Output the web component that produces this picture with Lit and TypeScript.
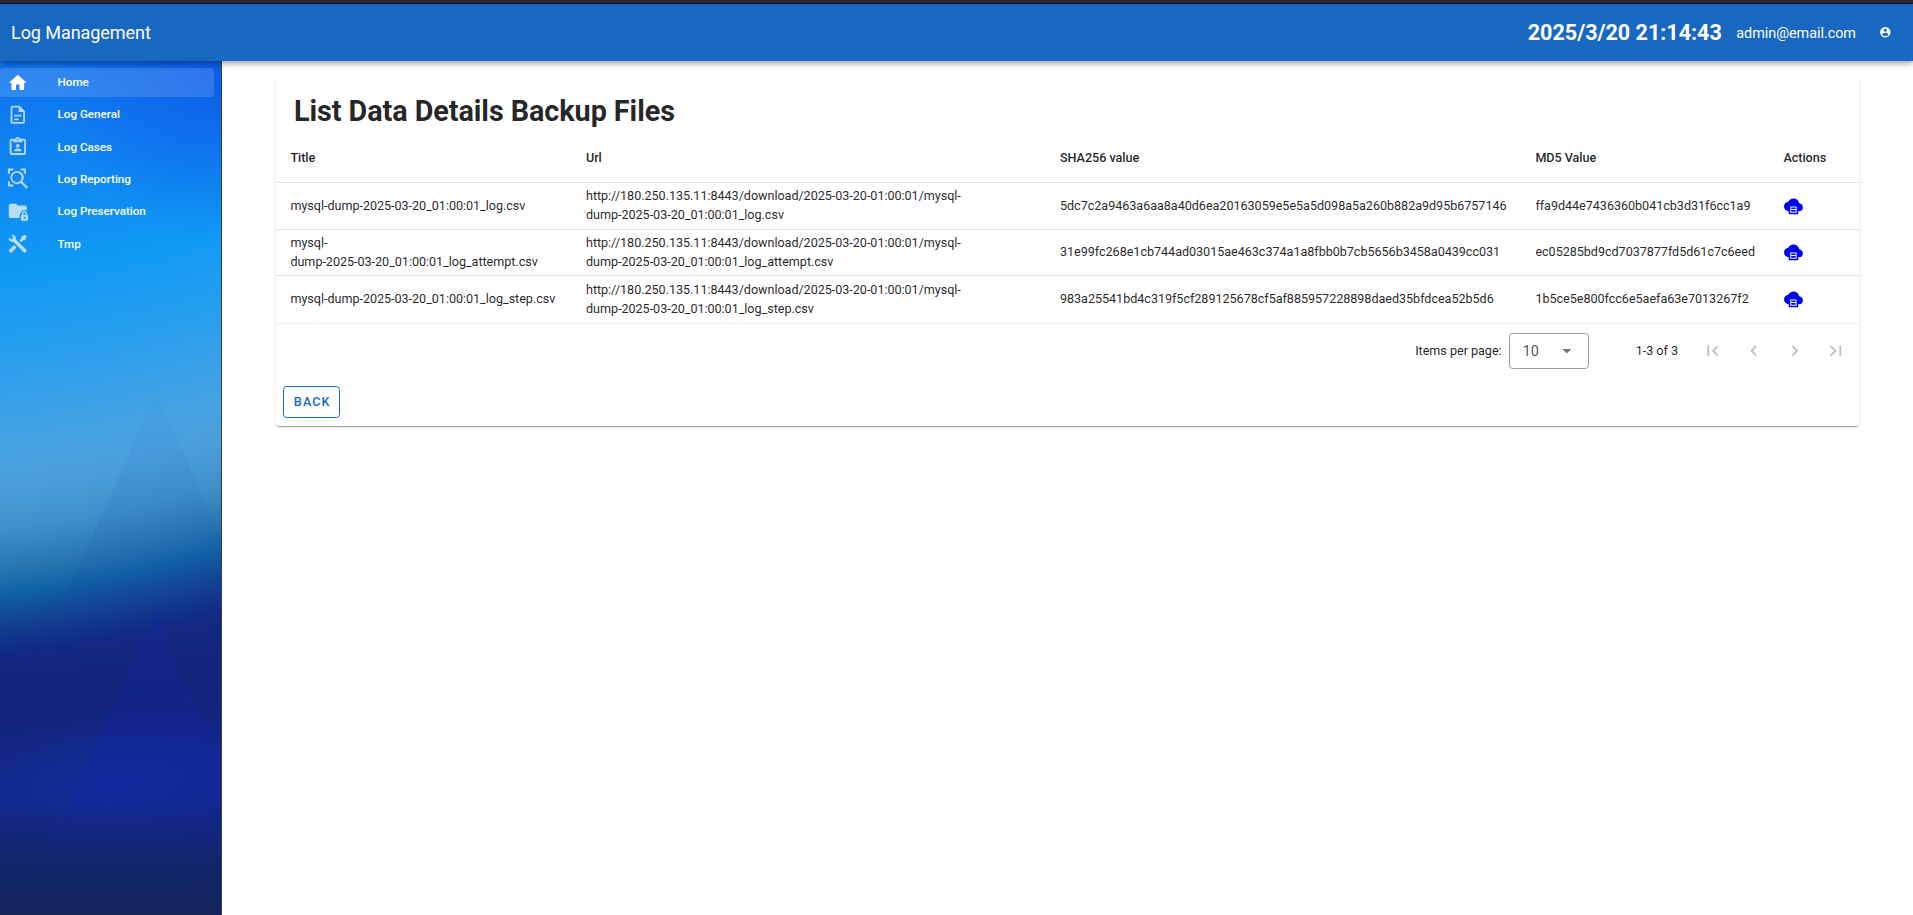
import { LitElement, html, css, svg } from "lit";
import { customElement } from "lit/decorators.js";
import { classMap } from "lit/directives/class-map.js";

const icons: Record<string, string> = {
  home: "M10,20V14H14V20H19V12H22L12,3L2,12H5V20H10Z",
  general: "M6,2A2,2 0 0,0 4,4V20A2,2 0 0,0 6,22H18A2,2 0 0,0 20,20V8L14,2H6M6,4H13V9H18V20H6V4M8,12V14H16V12H8M8,16V18H13V16H8Z",
  cases: "M19,3H14.82C14.4,1.84 13.3,1 12,1C10.7,1 9.6,1.84 9.18,3H5A2,2 0 0,0 3,5V19A2,2 0 0,0 5,21H19A2,2 0 0,0 21,19V5A2,2 0 0,0 19,3M12,3A1,1 0 0,1 13,4A1,1 0 0,1 12,5A1,1 0 0,1 11,4A1,1 0 0,1 12,3M7,7H17V5H19V19H5V5H7V7M12,9A2,2 0 0,1 14,11A2,2 0 0,1 12,13A2,2 0 0,1 10,11A2,2 0 0,1 12,9M8,17V16C8,14.67 10.67,14 12,14C13.33,14 16,14.67 16,16V17H8Z",
  reporting: "M1,.6H7V2.8H3.2V6.4H1V.6M15.2,.6H21V6.4H18.8V2.8H15.2V.6M1,14.6H3.2V18.3H7V20.5H1V14.6M11,3.2A7.4,7.4 0 0,1 17,15.1L23.4,21.2L21.6,23L15.2,16.8A7.4,7.4 0 1,1 11,3.2M11,5.4A5.3,5.3 0 1,0 11,16A5.3,5.3 0 1,0 11,5.4Z",
  preservation: "M10,3L12,5H20A2,2 0 0,1 22,7V10.6A4.6,4.6 0 0,0 15,14.2A2,2 0 0,0 14,16V19H4A2,2 0 0,1 2,17V5A2,2 0 0,1 4,3H10M22.3,15.3A1.2,1.2 0 0,1 23.5,16.5V20.8A1.2,1.2 0 0,1 22.3,22H16.7A1.2,1.2 0 0,1 15.5,20.8V16.5A1.2,1.2 0 0,1 16.7,15.3V14A2.8,2.8 0 0,1 22.3,14V15.3M20.8,15.3V14A1.3,1.3 0 0,0 18.2,14V15.3H20.8M19.5,17.6A1.1,1.1 0 1,0 19.5,19.8A1.1,1.1 0 1,0 19.5,17.6Z",
  tmp: "M21.71 20.29L20.29 21.71A1 1 0 0 1 18.88 21.71L7 9.85A3.81 3.81 0 0 1 6 10A4 4 0 0 1 2.22 4.7L4.76 7.24L5.29 6.71L6.71 5.29L7.24 4.76L4.7 2.22A4 4 0 0 1 10 6A3.81 3.81 0 0 1 9.85 7L21.71 18.88A1 1 0 0 1 21.71 20.29M2.29 18.88A1 1 0 0 0 2.29 20.29L3.71 21.71A1 1 0 0 0 5.12 21.71L10.59 16.25L7.76 13.42M20 2L16 4V6L13.83 8.17L15.83 10.17L18 8H20L22 4Z",
  account: "M12,19.2C9.5,19.2 7.29,17.92 6,16C6.03,14 10,12.9 12,12.9C14,12.9 17.97,14 18,16C16.71,17.92 14.5,19.2 12,19.2M12,5A3,3 0 0,1 15,8A3,3 0 0,1 12,11A3,3 0 0,1 9,8A3,3 0 0,1 12,5M12,2A10,10 0 0,0 2,12A10,10 0 0,0 12,22A10,10 0 0,0 22,12A10,10 0 0,0 12,2Z",
  cloud: "M12,2C9.11,2 6.6,3.64 5.35,6.04C2.34,6.36 0,8.91 0,12A6,6 0 0,0 6,18V22H18V18H19A5,5 0 0,0 24,13C24,10.36 21.95,8.22 19.35,8.04C18.67,4.59 15.64,2 12,2M8,12H16V20H8V12M9.2,13.2V15.2H14.8V13.2H9.2M9.2,16.6V18.6H14.8V16.6H9.2Z",
  first: "M18.41,16.59L13.82,12L18.41,7.41L17,6L11,12L17,18L18.41,16.59M6,6H8V18H6V6Z",
  prev: "M15.41,16.58L10.83,12L15.41,7.41L14,6L8,12L14,18L15.41,16.58Z",
  next: "M8.59,16.58L13.17,12L8.59,7.41L10,6L16,12L10,18L8.59,16.58Z",
  last: "M5.59,7.41L10.18,12L5.59,16.59L7,18L13,12L7,6L5.59,7.41M16,6H18V18H16V6Z",
  menuDown: "M7,10L12,15L17,10H7Z",
};
const icon = (name: string) =>
  html`<svg class="icon" viewBox="0 0 24 24" aria-hidden="true">${svg`<path fill="currentColor" fill-rule="evenodd" d=${icons[name]}></path>`}</svg>`;

@customElement("app-topbar")
class AppTopbar extends LitElement {
  static styles = css`
    :host { display: block; position: relative; z-index: 2; font-family: Roboto, sans-serif; }
    .frame { height: 3px; background: #2b2a33; border-bottom: 1px solid #0c0c0d; }
    .bar { display: flex; align-items: center; height: 57px; padding: 0 21.5px 0 11px; background: #1867c0; color: #fff;
      box-shadow: 0 2px 4px -1px rgba(0,0,0,.2), 0 4px 5px rgba(0,0,0,.14), 0 1px 10px rgba(0,0,0,.12); }
    .title { flex: 1; font-size: 18px; line-height: 27px; letter-spacing: -.06px; }
    .clock { font-size: 21.6px; font-weight: 700; margin-right: 14.5px; letter-spacing: -.03px; }
    .mail { font-size: 14.4px; margin-right: 23px; letter-spacing: -.04px; padding-top: 1px; }
    .icon { display: block; width: 12.6px; height: 12.6px; }
  `;
  render() {
    return html`<div class="frame"></div>
      <header class="bar">
        <div class="title">Log Management</div>
        <div class="clock">2025/3/20 21:14:43</div>
        <div class="mail">admin@email.com</div>
        ${icon("account")}
      </header>`;
  }
}

@customElement("app-sidebar")
class AppSidebar extends LitElement {
  static styles = css`
    :host { display: block; position: relative; width: 221px; border-right: 1px solid #333c55; font-family: Roboto, sans-serif; overflow: hidden; }
    .art { position: absolute; inset: 0; width: 100%; height: 100%; }
    .list { position: relative; padding: 7px 7px 0 0; display: flex; flex-direction: column; gap: 3.5px; }
    .item { display: flex; align-items: center; height: 28.8px; padding-left: 7.2px; border-radius: 3.6px; color: #fff; }
    .active { background: rgba(255,255,255,.14); }
    .icon { width: 21.6px; height: 21.6px; opacity: .7; margin-right: 28.8px; }
    .active .icon { opacity: 1; }
    .label { font-size: 11.7px; font-weight: 500; line-height: 14.4px; letter-spacing: -.03px; }
  `;
  items = [["home", "Home"], ["general", "Log General"], ["cases", "Log Cases"], ["reporting", "Log Reporting"], ["preservation", "Log Preservation"], ["tmp", "Tmp"]];
  // The horizon rises to the right along a shallow curve, so the gradient is laid in narrow strips.
  strips = Array.from({ length: 111 }, (_, i) => ({ x: i * 2, y: -(0.11 * i * 2 + 0.00043 * (i * 2) ** 2) }));
  render() {
    return html`<svg class="art" viewBox="0 0 221 854" preserveAspectRatio="none">
        <defs>
          <linearGradient id="sky" gradientUnits="userSpaceOnUse" x1="0" y1="0" x2="0" y2="900">
            <stop offset="0" stop-color="#0e70ec"></stop><stop offset=".1" stop-color="#0f82f2"></stop>
            <stop offset=".24" stop-color="#109af4"></stop><stop offset=".33" stop-color="#289eee"></stop>
            <stop offset=".43" stop-color="#46a3e2"></stop><stop offset=".47" stop-color="#4a9fda"></stop>
            <stop offset=".52" stop-color="#4090ca"></stop><stop offset=".565" stop-color="#2875b0"></stop>
            <stop offset=".592" stop-color="#1062a6"></stop><stop offset=".625" stop-color="#124292"></stop>
            <stop offset=".66" stop-color="#112884"></stop><stop offset=".69" stop-color="#11247a"></stop>
            <stop offset=".74" stop-color="#11247a"></stop><stop offset=".82" stop-color="#11268a"></stop>
            <stop offset="1" stop-color="#122470"></stop>
          </linearGradient>
          <radialGradient id="corner"><stop offset="0" stop-color="#0c50e4" stop-opacity=".7"></stop><stop offset="1" stop-color="#0c50e4" stop-opacity="0"></stop></radialGradient>
          <radialGradient id="glow"><stop offset="0" stop-color="#1134a4" stop-opacity=".6"></stop><stop offset="1" stop-color="#1134a4" stop-opacity="0"></stop></radialGradient>
          <linearGradient id="tri" x1="0" y1="0" x2="0" y2="1"><stop offset="0" stop-color="#1026a8" stop-opacity=".24"></stop><stop offset=".6" stop-color="#1020a8" stop-opacity=".3"></stop><stop offset="1" stop-color="#1028b0" stop-opacity="0"></stop></linearGradient>
          <linearGradient id="haze" x1="0" y1="0" x2="0" y2="1"><stop offset="0" stop-color="#3070d0" stop-opacity=".04"></stop><stop offset=".2" stop-color="#2460c8" stop-opacity=".14"></stop><stop offset=".6" stop-color="#102070" stop-opacity=".14"></stop><stop offset="1" stop-color="#1030a0" stop-opacity="0"></stop></linearGradient>
          <linearGradient id="floor" x1="0" y1="0" x2="0" y2="1"><stop offset="0" stop-color="#122458" stop-opacity="0"></stop><stop offset="1" stop-color="#122458" stop-opacity=".95"></stop></linearGradient>
        </defs>
        ${this.strips.map((s) => svg`<rect x=${s.x} y="-10" width="2" height="930" transform=${`translate(0 ${s.y.toFixed(2)})`} fill="url(#sky)"></rect>`)}
        <ellipse cx="221" cy="10" rx="170" ry="170" fill="url(#corner)"></ellipse>
        <path d="M157,331L0,680V854H221V479Z" fill="url(#haze)"></path>
        <ellipse cx="120" cy="722" rx="190" ry="75" fill="url(#glow)"></ellipse>
        <path d="M157,546L97,680L20,854H221V690L180,612Z" fill="url(#tri)"></path>
        <rect x="0" y="740" width="221" height="114" fill="url(#floor)"></rect>
      </svg>
      <nav class="list">${this.items.map(([name, label], i) => html`<div class=${classMap({ item: true, active: i === 0 })}>${icon(name)}<span class="label">${label}</span></div>`)}</nav>`;
  }
}

@customElement("backup-card")
class BackupCard extends LitElement {
  static styles = css`
    :host { display: block; height: 348px; box-sizing: border-box; background: #fff; border-radius: 3.6px; color: rgba(0,0,0,.87); font-family: Roboto, sans-serif;
      box-shadow: 0 2px 1px -1px rgba(0,0,0,.2), 0 1px 1px rgba(0,0,0,.14), 0 1px 3px rgba(0,0,0,.12); }
    h1 { margin: 0; padding: 12px 18px 0; font-size: 28.8px; line-height: 43px; font-weight: 700; letter-spacing: -.07px; }
    table { width: 100%; border-collapse: separate; border-spacing: 0; table-layout: fixed; font-size: 12.6px; line-height: 18.9px; letter-spacing: -.032px; }
    .c1 { width: 295.6px; } .c2 { width: 474px; } .c3 { width: 475.4px; } .c4 { width: 248px; }
    th { height: 50px; box-sizing: border-box; padding: 1.4px 14.4px 0; text-align: left; font-weight: 500; border-bottom: 1px solid rgba(0,0,0,.12); }
    td { height: 47px; box-sizing: border-box; padding: 0 14.4px; vertical-align: middle; border-bottom: 1px solid rgba(0,0,0,.12); }
    .middle td { height: 46px; }
    .last td { height: 48px; padding-top: .6px; border-bottom-color: rgba(0,0,0,.06); }
    .icon { display: block; }
    td .icon { width: 18.9px; height: 18.9px; margin-left: .4px; color: #0000ee; }
    .footer { display: flex; align-items: center; justify-content: flex-end; height: 54px; padding-right: 3px; font-size: 12.6px; }
    .caption { padding-bottom: 1px; letter-spacing: -.02px; }
    .select { display: flex; align-items: center; box-sizing: border-box; width: 80px; height: 36px; margin-left: 7px; padding-left: 13px; border: 1px solid #9c9c9c; border-radius: 3.6px; font-size: 14.4px; color: rgba(0,0,0,.7); }
    .select .icon { width: 21.6px; height: 21.6px; margin-left: 17.4px; color: #757575; }
    .range { margin: 0 14px 0 47px; }
    .page { display: flex; justify-content: center; width: 41px; color: rgba(0,0,0,.26); }
    .page .icon { width: 21.6px; height: 21.6px; }
    .back { display: flex; align-items: center; justify-content: center; box-sizing: border-box; width: 57px; height: 32px; margin: 8px 0 0 7px; padding: 0 0 1px 1.5px; border: 1px solid #1867c0; border-radius: 3.6px; background: none; color: #1867c0; font: 500 12.6px Roboto, sans-serif; letter-spacing: 1.12px; }
  `;
  rows = [
    ["log", "5dc7c2a9463a6aa8a40d6ea20163059e5e5a5d098a5a260b882a9d95b6757146", "ffa9d44e7436360b041cb3d31f6cc1a9"],
    ["log_attempt", "31e99fc268e1cb744ad03015ae463c374a1a8fbb0b7cb5656b3458a0439cc031", "ec05285bd9cd7037877fd5d61c7c6eed"],
    ["log_step", "983a25541bd4c319f5cf289125678cf5af885957228898daed35bfdcea52b5d6", "1b5ce5e800fcc6e5aefa63e7013267f2"],
  ];
  render() {
    return html`<h1>List Data Details Backup Files</h1>
      <table>
        <colgroup><col class="c1"><col class="c2"><col class="c3"><col class="c4"><col></colgroup>
        <thead><tr><th>Title</th><th>Url</th><th>SHA256 value</th><th>MD5 Value</th><th>Actions</th></tr></thead>
        <tbody>${this.rows.map(([name, sha, md5], i) => html`<tr class=${classMap({ middle: i === 1, last: i === 2 })}>
          <td>mysql-${i === 1 ? html`<br>` : ""}dump-2025-03-20_01:00:01_${name}.csv</td>
          <td>http://180.250.135.11:8443/download/2025-03-20-01:00:01/mysql-<br>dump-2025-03-20_01:00:01_${name}.csv</td>
          <td>${sha}</td><td>${md5}</td><td>${icon("cloud")}</td></tr>`)}</tbody>
      </table>
      <div class="footer">
        <span class="caption">Items per page:</span>
        <div class="select"><span>10</span>${icon("menuDown")}</div>
        <span class="caption range">1-3 of 3</span>
        ${["first", "prev", "next", "last"].map((n) => html`<span class="page">${icon(n)}</span>`)}
      </div>
      <button class="back">BACK</button>`;
  }
}

@customElement("app-root")
class AppRoot extends LitElement {
  static styles = css`
    :host { display: flex; flex-direction: column; height: 100vh; background: #fff; overflow: hidden; }
    .body { display: flex; flex: 1; min-height: 0; }
    .main { flex: 1; padding: 17px 54px 0; }
  `;
  render() {
    return html`<app-topbar></app-topbar>
      <div class="body"><app-sidebar></app-sidebar><main class="main"><backup-card></backup-card></main></div>`;
  }
}
